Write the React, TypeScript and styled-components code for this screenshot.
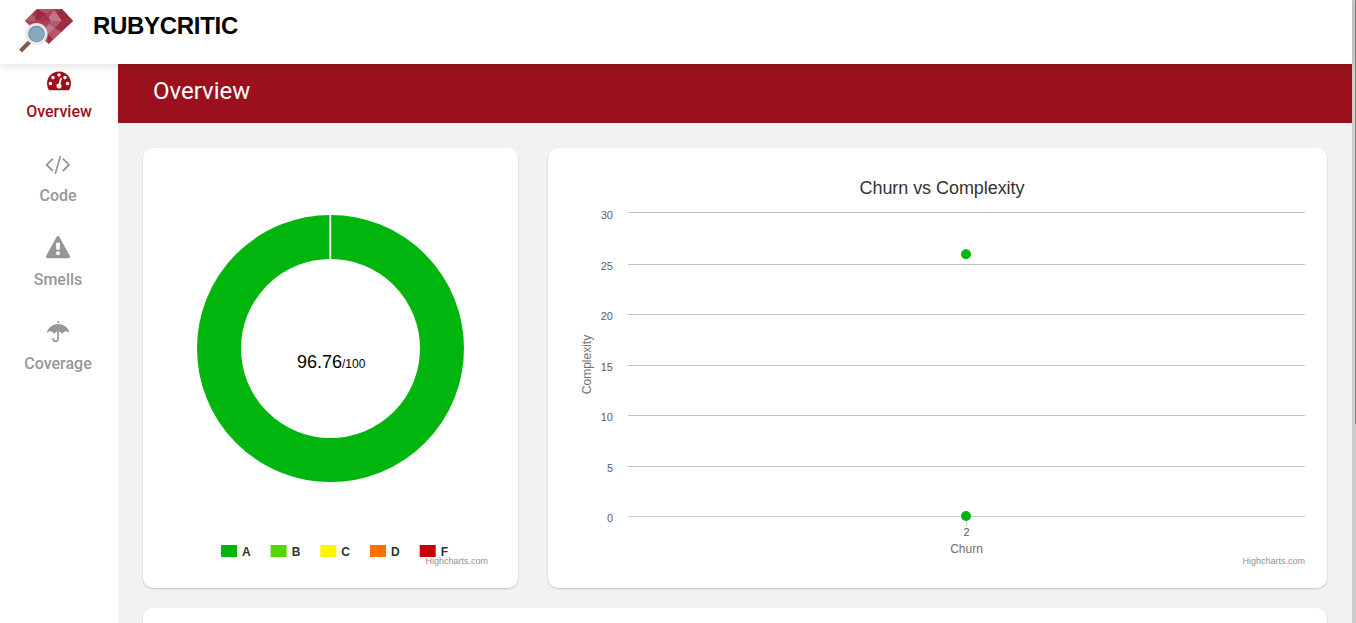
import React from "react";
import styled, { createGlobalStyle } from "styled-components";

const GlobalStyle = createGlobalStyle`
  * { box-sizing: border-box; }
  html, body { margin: 0; height: 100%; overflow: hidden; background: #f2f2f2; }
  body { font-family: Roboto, sans-serif; }
`;

const Window = styled.div`
  display: flex;
  width: 100%;
  height: 100vh;
  overflow: hidden;
`;

const Page = styled.div`
  flex: 1;
  min-width: 0;
  display: flex;
  flex-direction: column;
`;

const ScrollTrack = styled.div`
  width: 4px;
  background: #cdcdcd;
  border-left: 1px solid #d0ccc6;
  display: flex;
  justify-content: flex-end;
`;

const ScrollThumb = styled.div`
  width: 1px;
  height: 424px;
  background: #868686;
`;

const Header = styled.header`
  position: relative;
  z-index: 2;
  height: 64px;
  flex: none;
  display: flex;
  align-items: flex-start;
  padding: 8px 0 0 18px;
  background: #fff;
  box-shadow: 0 1px 10px rgba(0, 0, 0, 0.15);
`;

const Brand = styled.h1`
  margin: 3px 0 0 19px;
  font: bold 24px/29px "Liberation Sans", sans-serif;
  letter-spacing: -0.3px;
  color: #000;
`;

const Body = styled.div`
  flex: 1;
  min-height: 0;
  display: flex;
`;

const Sidebar = styled.nav`
  width: 118px;
  flex: none;
  background: #fff;
  padding-top: 4px;
`;

const NavItem = styled.a<{ $active?: boolean }>`
  display: flex;
  flex-direction: column;
  align-items: center;
  height: 84px;
  color: ${(p) => (p.$active ? "#9a111d" : "#979797")};
  font-weight: 500;
  font-size: 16px;
  line-height: 20px;
  padding-right: ${(p) => (p.$active ? 0 : 2)}px;

  svg { display: block; fill: currentColor; margin-bottom: 10px; }
`;

const Main = styled.main`
  flex: 1;
  min-width: 0;
  overflow: hidden;
`;

const Banner = styled.div`
  height: 59px;
  padding: 12px 35px;
  background: #9a111d;
  color: #fff;
  font-size: 24px;
  line-height: 30px;
`;

const Content = styled.div`
  display: grid;
  grid-template-columns: 375px 1fr;
  column-gap: 30px;
  row-gap: 20px;
  padding: 25px;
`;

const Card = styled.section<{ $wide?: boolean }>`
  height: 440px;
  background: #fff;
  border-radius: 10px;
  box-shadow: 0 1px 2px rgba(0, 0, 0, 0.2);
  grid-column: ${(p) => (p.$wide ? "1 / -1" : "auto")};
`;

const Chart = styled.svg`
  display: block;
  width: 100%;
  height: 440px;
  font-family: "Liberation Sans", sans-serif;
`;

const icons = {
  overview: {
    w: 1792,
    d: "M384 1152q0-53-37.5-90.5t-90.5-37.5-90.5 37.5-37.5 90.5 37.5 90.5 90.5 37.5 90.5-37.5 37.5-90.5zm192-448q0-53-37.5-90.5t-90.5-37.5-90.5 37.5-37.5 90.5 37.5 90.5 90.5 37.5 90.5-37.5 37.5-90.5zm428 481l101-382q6-26-7.5-48.5t-38.5-29.5-48 6.5-30 39.5l-101 382q-60 5-107 43.5t-63 98.5q-20 77 20 146t117 89 146-20 89-117q16-60-6-117t-72-91zm660-33q0-53-37.5-90.5t-90.5-37.5-90.5 37.5-37.5 90.5 37.5 90.5 90.5 37.5 90.5-37.5 37.5-90.5zm-640-640q0-53-37.5-90.5t-90.5-37.5-90.5 37.5-37.5 90.5 37.5 90.5 90.5 37.5 90.5-37.5 37.5-90.5zm448 192q0-53-37.5-90.5t-90.5-37.5-90.5 37.5-37.5 90.5 37.5 90.5 90.5 37.5 90.5-37.5 37.5-90.5zm320 448q0 261-141 483-19 29-54 29h-1402q-35 0-54-29-141-221-141-483 0-182 71-348t191-286 286-191 348-71 348 71 286 191 191 286 71 348z",
  },
  code: {
    w: 1920,
    d: "M617 1399l-50 50q-10 10-23 10t-23-10l-466-466q-10-10-10-23t10-23l466-466q10-10 23-10t23 10l50 50q10 10 10 23t-10 23l-393 393 393 393q10 10 10 23t-10 23zm591-1067l-373 1291q-4 13-15.5 19.5t-23.5 2.5l-62-17q-13-4-19.5-15.5t-2.5-24.5l373-1291q4-13 15.5-19.5t23.5-2.5l62 17q13 4 19.5 15.5t2.5 24.5zm657 651l-466 466q-10 10-23 10t-23-10l-50-50q-10-10-10-23t10-23l393-393-393-393q-10-10-10-23t10-23l50-50q10-10 23-10t23 10l466 466q10 10 10 23t-10 23z",
  },
  smells: {
    w: 1792,
    d: "M1024 1375v-190q0-14-9.5-23.5t-22.5-9.5h-192q-13 0-22.5 9.5t-9.5 23.5v190q0 14 9.5 23.5t22.5 9.5h192q13 0 22.5-9.5t9.5-23.5zm-2-374l18-459q0-12-10-19-13-11-24-11h-220q-11 0-24 11-10 7-10 21l17 457q0 10 10 16.5t24 6.5h185q14 0 23.5-6.5t10.5-16.5zm-14-934l768 1408q35 63-2 126-17 29-46.5 46t-63.5 17h-1536q-34 0-63.5-17t-46.5-46q-37-63-2-126l768-1408q17-31 47-49t65-18 65 18 47 49z",
  },
  coverage: {
    w: 1664,
    d: "M896 862v546q0 104-76 180t-180 76-180-76-76-180q0-26 19-45t45-19 45 19 19 45q0 50 39 89t89 39 89-39 39-89v-546q33-11 64-11t64 11zm768 42q0 13-9.5 22.5t-22.5 9.5q-11 0-23-10-49-46-93-69t-102-23q-68 0-128 37t-103 97q-7 10-17.5 28t-14.5 24q-11 17-28 17-18 0-29-17-4-6-14.5-24t-17.5-28q-43-60-102.5-97t-127.5-37-127.5 37-102.5 97q-7 10-17.5 28t-14.5 24q-11 17-29 17-17 0-28-17-4-6-14.5-24t-17.5-28q-43-60-103-97t-128-37q-58 0-102 23t-93 69q-12 10-23 10-13 0-22.5-9.5t-9.5-22.5q0-5 1-7 45-183 172.5-319.5t298-204.5 360.5-68q140 0 274.5 40t246.5 113.5 194.5 187 115.5 251.5q1 2 1 7zm-768-768v98q-42-2-64-2t-64 2v-98q0-26 19-45t45-19 45 19 19 45z",
  },
};

const Icon = ({ name }: { name: keyof typeof icons }) => (
  <svg width={(icons[name].w * 24) / 1792} height="24" viewBox={`0 0 ${icons[name].w} 1792`}>
    <path d={icons[name].d} />
  </svg>
);

const Logo = () => (
  <svg width="56" height="46" viewBox="18 8 56 46">
    <path d="M37 9H62L73 21L48.5 44L25 21Z" fill="#a94457" />
    <path d="M37 9L34 21H25Z" fill="#a23546" />
    <path d="M32 14L38 21H26Z" fill="#b8596c" />
    <path d="M37 9L47 14L35 21Z" fill="#952a3b" />
    <path d="M37 9H54L46 14Z" fill="#b45569" />
    <path d="M54 9H62L60 13L54 11Z" fill="#a23b4c" />
    <path d="M54 10L62 21H46Z" fill="#c07589" />
    <path d="M62 9L73 21H62L56 12Z" fill="#9a2b3c" />
    <path d="M46 14L51 21H36Z" fill="#a23949" />
    <path d="M51 21H62L55 28L49 24Z" fill="#b25a6e" />
    <path d="M62 21H73L61 32L55 28Z" fill="#9c2d3e" />
    <path d="M49 24L55 28L48 35L44 29Z" fill="#c0748a" />
    <path d="M48 35L55 28L61 32L48.5 44Z" fill="#b4576b" />
    <path d="M48 34L53 39L48.5 44Z" fill="#962b3e" />
    <path d="M30 41.5L20.5 51" stroke="#805b49" strokeWidth="4" />
    <circle cx="36.5" cy="34" r="11" fill="#e8e9ea" />
    <circle cx="36.5" cy="34" r="8.3" fill="#6d91a7" />
    <circle cx="36.7" cy="34.3" r="7.2" fill="#87a9bd" />
  </svg>
);

const grades = [
  { label: "A", color: "#00b50e", x: 78, tx: 99 },
  { label: "B", color: "#53d700", x: 127.6, tx: 148.7 },
  { label: "C", color: "#fef400", x: 177.3, tx: 198.2 },
  { label: "D", color: "#ff7000", x: 227, tx: 248 },
  { label: "F", color: "#c40009", x: 276.7, tx: 297.8 },
];

const ScoreChart = () => (
  <Chart viewBox="0 0 375 440">
    <circle cx="187.5" cy="200.5" r="111.5" fill="none" stroke="#00b50e" strokeWidth="44" />
    <path d="M187.3 66V112" stroke="#fff" strokeWidth="1.8" />
    <text x="154" y="220" fontSize="18">96.76</text>
    <text x="199" y="220" fontSize="12">/100</text>
    {grades.map((g) => (
      <g key={g.label}>
        <rect x={g.x} y="397" width="16" height="12" fill={g.color} />
        <text x={g.tx} y="408" fontSize="12" fontWeight="bold" fill="#333">{g.label}</text>
      </g>
    ))}
    <text x="345" y="416" fontSize="9" fill="#909090" textAnchor="end">Highcharts.com</text>
  </Chart>
);

const ticks = [
  { value: 30, y: 64.5 },
  { value: 25, y: 116.5 },
  { value: 20, y: 166.5 },
  { value: 15, y: 217.5 },
  { value: 10, y: 267.5 },
  { value: 5, y: 318.5 },
];

const ChurnChart = () => (
  <Chart viewBox="0 0 779 440">
    <text x="394" y="46" fontSize="18" fill="#333" textAnchor="middle" textLength="165">Churn vs Complexity</text>
    {ticks.map((t) => (
      <path key={t.value} d={`M80 ${t.y}H757`} stroke="#c0c0c0" />
    ))}
    <path d="M80 368.5H757M418.5 368V378" stroke="#c0d0e0" fill="none" />
    {[30, 25, 20, 15, 10, 5, 0].map((v, i) => (
      <text key={v} x="65" y={71 + i * 50.5} fontSize="11" fill="#606060" textAnchor="end">{v}</text>
    ))}
    <text transform="translate(43 216.5) rotate(-90)" fontSize="12" fill="#707070" textAnchor="middle">Complexity</text>
    <circle cx="418" cy="106.3" r="5" fill="#00b50e" />
    <circle cx="418" cy="368" r="5" fill="#00b50e" />
    <text x="418.5" y="388" fontSize="11" fill="#606060" textAnchor="middle">2</text>
    <text x="418.5" y="405" fontSize="12" fill="#707070" textAnchor="middle">Churn</text>
    <text x="757" y="416" fontSize="9" fill="#909090" textAnchor="end">Highcharts.com</text>
  </Chart>
);

export default function App() {
  return (
    <Window>
      <GlobalStyle />
      <Page>
        <Header>
          <Logo />
          <Brand>RUBYCRITIC</Brand>
        </Header>
        <Body>
          <Sidebar>
            <NavItem $active><Icon name="overview" />Overview</NavItem>
            <NavItem><Icon name="code" />Code</NavItem>
            <NavItem><Icon name="smells" />Smells</NavItem>
            <NavItem><Icon name="coverage" />Coverage</NavItem>
          </Sidebar>
          <Main>
            <Banner>Overview</Banner>
            <Content>
              <Card><ScoreChart /></Card>
              <Card><ChurnChart /></Card>
              <Card $wide />
            </Content>
          </Main>
        </Body>
      </Page>
      <ScrollTrack><ScrollThumb /></ScrollTrack>
    </Window>
  );
}
